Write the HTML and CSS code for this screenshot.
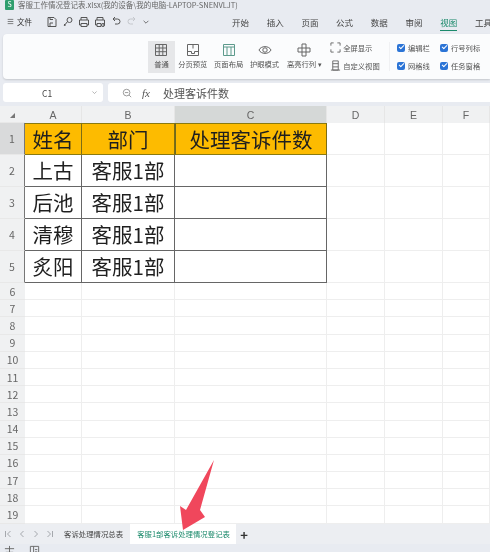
FILE: index.html
```html
<!DOCTYPE html>
<html lang="zh-CN">
<head>
    <meta charset="UTF-8">
    <meta name="viewport" content="width=device-width, initial-scale=1.0">
    <title>客服工作情况登记表</title>
    <link rel="stylesheet" href="styles.css">
</head>
<body>
<div class="page">
    <!-- Title bar -->
    <div class="title-bar">
        <span class="app-logo">S</span>
        <span class="title-text">客服工作情况登记表.xlsx(我的设备\我的电脑-LAPTOP-SNENVLJT)</span>
    </div>

    <!-- Menu row -->
    <div class="menu-bar">
        <div class="quick-tools">
            <svg class="qt-icon burger" viewBox="0 0 10 10"><path d="M1 2h8M1 5h8M1 8h8"/></svg>
            <span class="file-label">文件</span>
            <svg class="qt-icon first" viewBox="0 0 12 12"><path d="M2 1.500h6l2 2v7H2zM4 10.500V7h3M4 1.500v2h3"/></svg>
            <svg class="qt-icon" viewBox="0 0 12 12"><circle cx="7.500" cy="4" r="2.500"/><path d="M5.500 5.500L2 10M2 8l1.500 1.500"/></svg>
            <svg class="qt-icon" viewBox="0 0 12 12"><path d="M3 4V1.500h6V4M3 9H1.500V4h9v5H9M3 7.500h6v3H3z"/></svg>
            <svg class="qt-icon" viewBox="0 0 12 12"><path d="M3 4V1.500h6V4M3 9H1.500V4h9v5H9M3 7.500h4v3H3z"/><circle cx="9" cy="9" r="1.500"/></svg>
            <svg class="qt-icon" viewBox="0 0 12 12"><path d="M3 3h4.500a2.500 2.500 0 0 1 0 5H5M3 3l2-2M3 3l2 2"/></svg>
            <svg class="qt-icon faded" viewBox="0 0 12 12"><path d="M9 3H4.500a2.500 2.500 0 0 0 0 5H7M9 3L7 1M9 3L7 5"/></svg>
            <svg class="qt-icon small" viewBox="0 0 10 10"><path d="M2 3.500l3 3 3-3"/></svg>
        </div>
        <nav class="menu-tabs">
            <span>开始</span>
            <span>插入</span>
            <span>页面</span>
            <span>公式</span>
            <span>数据</span>
            <span>审阅</span>
            <span class="active">视图</span>
            <span>工具</span>
        </nav>
    </div>

    <!-- Ribbon -->
    <div class="ribbon">
        <div class="rb-btn selected">
            <svg viewBox="0 0 14 14"><path d="M1.500 1.500h11v11h-11zM1.500 5h11M1.500 8.700h11M5.200 1.500v11M8.800 1.500v11"/></svg>
            <span>普通</span>
        </div>
        <div class="rb-btn">
            <svg viewBox="0 0 14 14"><path d="M1.500 1.500h11v11h-11zM1.500 8.500h4v2h3v-2h4M7 1.500v4"/></svg>
            <span>分页预览</span>
        </div>
        <div class="rb-btn">
            <svg class="teal" viewBox="0 0 14 14"><path d="M1.500 1.500h11v11h-11zM1.500 4h11M5 4v8.500M9 4v8.500"/></svg>
            <span>页面布局</span>
        </div>
        <div class="rb-btn">
            <svg viewBox="0 0 14 14"><path d="M1 7c2-4.500 10-4.500 12 0c-2 4.500-10 4.500-12 0z"/><circle cx="7" cy="7" r="2.200"/></svg>
            <span>护眼模式</span>
        </div>
        <div class="rb-btn wide">
            <svg viewBox="0 0 14 14"><path d="M5 1h4v4h4v4H9v4H5V9H1V5h4zM5 5h4v4H5z"/></svg>
            <span>高亮行列 ▾</span>
        </div>
        <div class="rb-stack">
            <div class="rb-line">
                <svg viewBox="0 0 12 12"><path d="M1 4V1h3M8 1h3v3M11 8v3H8M4 11H1V8"/></svg>
                <span>全屏显示</span>
            </div>
            <div class="rb-line">
                <svg viewBox="0 0 12 12"><path d="M3 1h6v10H3zM3 4h6M3 7.500h6M1 11h10"/></svg>
                <span>自定义视图</span>
            </div>
        </div>
        <div class="rb-checks">
            <label class="chk"><i></i>编辑栏</label>
            <label class="chk"><i></i>行号列标</label>
            <label class="chk"><i></i>网格线</label>
            <label class="chk"><i></i>任务窗格</label>
        </div>
    </div>

    <!-- Formula bar -->
    <div class="formula-bar">
        <div class="name-box">
            <span>C1</span>
            <svg viewBox="0 0 10 10"><path d="M2 3.500l3 3 3-3"/></svg>
        </div>
        <div class="formula-box">
            <svg viewBox="0 0 12 12"><circle cx="5.500" cy="5.500" r="4"/><path d="M8.500 8.500L11 11M3.500 5.500h4"/></svg>
            <em>fx</em>
            <span>处理客诉件数</span>
        </div>
    </div>

    <!-- Sheet -->
    <div class="sheet">
        <div class="row head">
            <div class="rh corner">◢</div><div class="ch">A</div><div class="ch">B</div><div class="ch cur">C</div><div class="ch">D</div><div class="ch">E</div><div class="ch">F</div>
        </div>
        <div class="row tall title-row">
            <div class="rh cur">1</div><div class="c hd">姓名</div><div class="c hd">部门</div><div class="c hd sel">处理客诉件数</div><div class="c"></div><div class="c"></div><div class="c"></div>
        </div>
        <div class="row tall">
            <div class="rh">2</div><div class="c td">上古</div><div class="c td">客服1部</div><div class="c td"></div><div class="c"></div><div class="c"></div><div class="c"></div>
        </div>
        <div class="row tall">
            <div class="rh">3</div><div class="c td">后池</div><div class="c td">客服1部</div><div class="c td"></div><div class="c"></div><div class="c"></div><div class="c"></div>
        </div>
        <div class="row tall">
            <div class="rh">4</div><div class="c td">清穆</div><div class="c td">客服1部</div><div class="c td"></div><div class="c"></div><div class="c"></div><div class="c"></div>
        </div>
        <div class="row tall">
            <div class="rh">5</div><div class="c td">炙阳</div><div class="c td">客服1部</div><div class="c td"></div><div class="c"></div><div class="c"></div><div class="c"></div>
        </div>
        <div class="row"><div class="rh">6</div><div class="c"></div><div class="c"></div><div class="c"></div><div class="c"></div><div class="c"></div><div class="c"></div></div>
        <div class="row"><div class="rh">7</div><div class="c"></div><div class="c"></div><div class="c"></div><div class="c"></div><div class="c"></div><div class="c"></div></div>
        <div class="row"><div class="rh">8</div><div class="c"></div><div class="c"></div><div class="c"></div><div class="c"></div><div class="c"></div><div class="c"></div></div>
        <div class="row"><div class="rh">9</div><div class="c"></div><div class="c"></div><div class="c"></div><div class="c"></div><div class="c"></div><div class="c"></div></div>
        <div class="row"><div class="rh">10</div><div class="c"></div><div class="c"></div><div class="c"></div><div class="c"></div><div class="c"></div><div class="c"></div></div>
        <div class="row"><div class="rh">11</div><div class="c"></div><div class="c"></div><div class="c"></div><div class="c"></div><div class="c"></div><div class="c"></div></div>
        <div class="row"><div class="rh">12</div><div class="c"></div><div class="c"></div><div class="c"></div><div class="c"></div><div class="c"></div><div class="c"></div></div>
        <div class="row"><div class="rh">13</div><div class="c"></div><div class="c"></div><div class="c"></div><div class="c"></div><div class="c"></div><div class="c"></div></div>
        <div class="row"><div class="rh">14</div><div class="c"></div><div class="c"></div><div class="c"></div><div class="c"></div><div class="c"></div><div class="c"></div></div>
        <div class="row"><div class="rh">15</div><div class="c"></div><div class="c"></div><div class="c"></div><div class="c"></div><div class="c"></div><div class="c"></div></div>
        <div class="row"><div class="rh">16</div><div class="c"></div><div class="c"></div><div class="c"></div><div class="c"></div><div class="c"></div><div class="c"></div></div>
        <div class="row"><div class="rh">17</div><div class="c"></div><div class="c"></div><div class="c"></div><div class="c"></div><div class="c"></div><div class="c"></div></div>
        <div class="row"><div class="rh">18</div><div class="c"></div><div class="c"></div><div class="c"></div><div class="c"></div><div class="c"></div><div class="c"></div></div>
        <div class="row"><div class="rh">19</div><div class="c"></div><div class="c"></div><div class="c"></div><div class="c"></div><div class="c"></div><div class="c"></div></div>
    </div>

    <!-- Sheet tabs -->
    <div class="tab-bar">
        <div class="tab-nav">
            <svg viewBox="0 0 8 8"><path d="M1.500 1v6M6.500 1L3.500 4l3 3"/></svg>
            <svg viewBox="0 0 8 8"><path d="M5.500 1L2.500 4l3 3"/></svg>
            <svg viewBox="0 0 8 8"><path d="M2.500 1l3 3-3 3"/></svg>
            <svg viewBox="0 0 8 8"><path d="M6.500 1v6M1.500 1l3 3-3 3"/></svg>
        </div>
        <div class="sheet-tab">客诉处理情况总表</div>
        <div class="sheet-tab active">客服1部客诉处理情况登记表</div>
        <div class="add-tab">+</div>
    </div>

    <!-- Status bar -->
    <div class="status-bar">
        <svg viewBox="0 0 12 12"><path d="M6 1v10M1 4h10M2 8h8"/></svg>
        <svg viewBox="0 0 12 12"><path d="M1.500 1.500h9v9h-9zM5 1.500v9M6.500 5h2.500M6.500 7.500h2.500"/></svg>
    </div>

    <!-- Red annotation arrow -->
    <svg class="arrow" viewBox="0 0 490 552"><polygon points="214,460 200,510 205,517 183,530 180,506 186,510"/></svg>
</div>
</body>
</html>
```

FILE: styles.css
```css
* {
    margin: 0;
    padding: 0;
    box-sizing: border-box;
    font-family: "Noto Sans CJK SC", "Liberation Sans", sans-serif;
}

body {
    background-color: #e8ebf1;
    overflow: hidden;
}

.page {
    position: relative;
    display: flex;
    flex-direction: column;
    width: 490px;
    height: 552px;
    overflow: hidden;
    background-color: #e8ebf1;
    filter: blur(0.35px);
}

svg {
    fill: none;
    stroke: #666;
    stroke-width: 1;
}

/* Title bar */
.title-bar {
    display: flex;
    align-items: center;
    gap: 4px;
    height: 9px;
    padding-left: 5px;
}

.app-logo {
    display: flex;
    align-items: center;
    justify-content: center;
    width: 9px;
    height: 10px;
    border-radius: 1px;
    background: #2f9e6e;
    color: white;
    font-size: 7px;
    line-height: 1;
}

.title-text {
    font-size: 7.500px;
    line-height: 9px;
    color: #666;
    white-space: nowrap;
}

/* Menu row */
.menu-bar {
    display: flex;
    justify-content: space-between;
    align-items: center;
    height: 25px;
}

.quick-tools {
    display: flex;
    align-items: center;
    padding-left: 7px;
}

.qt-icon {
    width: 12px;
    height: 12px;
    margin-right: 4px;
    stroke: #555;
}

.qt-icon.burger {
    width: 7px;
    height: 7px;
    margin-right: 3px;
}

.qt-icon.first {
    margin-left: 14px;
}

.qt-icon.small {
    width: 8px;
    height: 8px;
}

.qt-icon.faded {
    stroke: #c4c7cc;
}

.file-label {
    font-size: 7.500px;
    color: #333;
}

.menu-tabs {
    display: flex;
    flex-shrink: 0;
    gap: 17.700px;
    width: 258px;
    font-size: 8.500px;
    color: #444;
}

.menu-tabs span {
    flex-shrink: 0;
    padding: 4px 0 2px;
    border-bottom: 1px solid transparent;
}

.menu-tabs .active {
    color: #1b8a6b;
    border-bottom-color: #1b8a6b;
}

/* Ribbon */
.ribbon {
    display: flex;
    align-items: center;
    height: 45px;
    margin-left: 3px;
    padding-left: 145px;
    border-radius: 4px 0 0 4px;
    background: #fbfcfd;
    box-shadow: 0 1px 2px rgba(0, 0, 0, 0.15);
}

.rb-btn {
    display: flex;
    flex-direction: column;
    align-items: center;
    gap: 2px;
    width: 36px;
    height: 32px;
    padding-top: 2px;
    font-size: 7.300px;
    line-height: 10px;
    color: #555;
    white-space: nowrap;
}

.rb-btn svg {
    width: 14px;
    height: 14px;
    flex-shrink: 0;
}

.rb-btn svg.teal {
    stroke: #5d9a8c;
}

.rb-btn.selected {
    width: 27px;
    background: #e6e7e9;
}

.rb-btn.wide {
    width: 44px;
}

.rb-stack {
    display: flex;
    flex-direction: column;
    gap: 7px;
    width: 60px;
    margin-left: 4px;
    padding-right: 7px;
    border-right: 1px solid #f0f1f3;
}

.rb-line {
    display: flex;
    align-items: center;
    gap: 2px;
    font-size: 7.300px;
    line-height: 10px;
    color: #555;
    white-space: nowrap;
}

.rb-line svg {
    width: 11px;
    height: 11px;
    flex-shrink: 0;
}

.rb-checks {
    display: grid;
    grid-template-columns: 43px 50px;
    row-gap: 8px;
    margin-left: 7px;
}

.chk {
    display: flex;
    align-items: center;
    gap: 3px;
    font-size: 7.300px;
    line-height: 10px;
    color: #555;
    white-space: nowrap;
}

.chk i {
    position: relative;
    width: 8px;
    height: 8px;
    border-radius: 2px;
    background: #2b74d6;
}

.chk i::after {
    content: '';
    position: absolute;
    left: 2px;
    top: 1.500px;
    width: 4px;
    height: 2px;
    border-left: 1px solid white;
    border-bottom: 1px solid white;
    transform: rotate(-45deg);
}

/* Formula bar */
.formula-bar {
    display: flex;
    gap: 5px;
    height: 19px;
    margin: 4px 0 4px 3px;
}

.name-box {
    display: flex;
    align-items: center;
    justify-content: space-between;
    width: 100px;
    padding: 0 5px 0 39px;
    border-radius: 3px;
    background: white;
    font-size: 8.500px;
    color: #444;
}

.name-box svg {
    width: 7px;
    height: 7px;
    stroke: #999;
}

.formula-box {
    display: flex;
    flex: 1;
    align-items: center;
    padding-left: 14px;
    background: white;
    border-radius: 3px 0 0 3px;
    color: #555;
}

.formula-box svg {
    width: 10px;
    height: 10px;
    stroke: #888;
}

.formula-box em {
    margin-left: 10px;
    font-family: "Liberation Serif", serif;
    font-size: 11px;
}

.formula-box span {
    margin-left: 13px;
    font-size: 11px;
}

/* Sheet */
.sheet {
    display: flex;
    flex-direction: column;
    flex: 1;
    background: white;
}

.row {
    display: grid;
    grid-template-columns: 25px 57px 93px 152px 58px 58px 47px;
    height: 17.200px;
}

.row.head {
    height: 17px;
}

.row.tall {
    height: 32px;
}

.rh {
    display: flex;
    align-items: center;
    justify-content: center;
    background: #f0f1f2;
    border-bottom: 1px solid #e8e8e8;
    font-size: 10.500px;
    color: #666;
}

.rh.cur {
    background: #d9dadb;
}

.tall .rh {
    border-right: 1px solid #777;
}

.corner {
    font-size: 5px;
    color: #777;
}

.ch {
    display: flex;
    align-items: center;
    justify-content: center;
    background: #f0f1f2;
    border-right: 1px solid #e6e6e6;
    font-family: "Liberation Sans", sans-serif;
    font-size: 10.500px;
    color: #666;
}

.ch.cur {
    background: #d5d8d7;
}

.c {
    display: flex;
    align-items: center;
    justify-content: center;
    border-right: 1px solid #eeeeee;
    border-bottom: 1px solid #eeeeee;
}

.hd, .td {
    font-size: 20.500px;
    line-height: 1;
    color: #1f1f1f;
    white-space: nowrap;
    border-right: 1px solid #666;
    border-bottom: 1px solid #666;
}

.hd {
    background: #fdbb00;
    border-right-color: #7d6d14;
    border-bottom-color: #8a7a10;
}

.title-row .hd {
    border-top: 1px solid #8a7a10;
}

.sel {
    border-left: 1px solid #6d6a20;
}

/* Sheet tabs */
.tab-bar {
    display: flex;
    align-items: center;
    height: 20px;
    background: #eceef2;
}

.tab-nav {
    display: flex;
    gap: 6px;
    width: 59px;
    padding-left: 4px;
}

.tab-nav svg {
    width: 8px;
    height: 8px;
    stroke: #a5a8ad;
}

.sheet-tab {
    padding: 0 7px 0 5px;
    font-size: 7.400px;
    line-height: 20px;
    color: #444;
    white-space: nowrap;
}

.sheet-tab.active {
    width: 106px;
    padding: 0 7px;
    background: white;
    color: #1b8a6b;
}

.add-tab {
    margin-left: 4px;
    font-size: 13px;
    font-weight: 700;
    color: #333;
}

/* Status bar */
.status-bar {
    display: flex;
    gap: 14px;
    height: 8px;
    padding: 1px 0 0 4px;
}

.status-bar svg {
    width: 11px;
    height: 11px;
}

/* Annotation */
.arrow {
    position: absolute;
    left: 0;
    top: 0;
    width: 490px;
    height: 552px;
    stroke: none;
    fill: #f0475c;
}
```
